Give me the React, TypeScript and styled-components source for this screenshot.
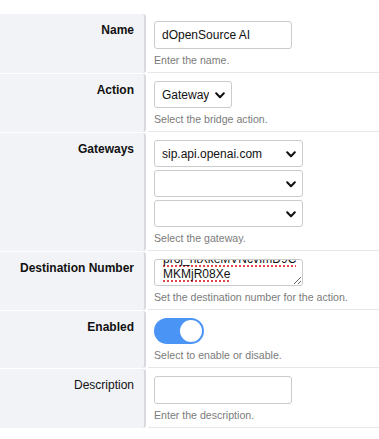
import React, { useEffect, useRef } from "react";
import styled, { createGlobalStyle } from "styled-components";

const GlobalStyle = createGlobalStyle`
  html, body {
    margin: 0;
    padding: 0;
    background: #ffffff;
  }
  body {
    font-family: "Liberation Sans", Arial, sans-serif;
    color: #000;
  }
`;

const FormTable = styled.div`
  display: grid;
  grid-template-columns: 146px 1fr;
  column-gap: 2px;
  row-gap: 1px;
  padding-top: 14px;
`;

const LabelCell = styled.div<{ $required?: boolean }>`
  background: #f2f3f7;
  border-right: 2px solid #d9dadf;
  border-top-right-radius: 3px;
  border-bottom-right-radius: 3px;
  padding: 9px 10px 0 0;
  text-align: right;
  font-size: 12px;
  line-height: 14px;
  font-weight: ${({ $required }) => ($required ? 700 : 400)};
  color: #111;
`;

const ValueCell = styled.div`
  border-bottom: 1px solid #e6e7eb;
  padding: 7px 0 5px 6px;
  display: flex;
  flex-direction: column;
  align-items: flex-start;
`;

const Help = styled.div`
  margin-top: 4px;
  font-size: 10.6px;
  line-height: 14px;
  color: #7b7b7b;
`;

const TextInput = styled.input`
  box-sizing: border-box;
  width: 138px;
  height: 28px;
  padding: 0 7px;
  border: 1px solid #cbcbcb;
  border-radius: 3px;
  font-family: inherit;
  font-size: 12px;
  color: #111;
  background: #fff;
  outline: none;
`;

const SelectStack = styled.div`
  display: flex;
  flex-direction: column;
  gap: 3px;
`;

const SelectWrap = styled.div`
  position: relative;
  display: inline-block;
`;

const Select = styled.select<{ $wide?: boolean }>`
  appearance: none;
  -webkit-appearance: none;
  box-sizing: border-box;
  width: ${({ $wide }) => ($wide ? "149px" : "78px")};
  height: 27px;
  padding: 0 22px 0 7px;
  border: 1px solid #cbcbcb;
  border-radius: 3px;
  background: #fff;
  font-family: inherit;
  font-size: 12px;
  color: #111;
  outline: none;
`;

const Chevron = styled.svg`
  position: absolute;
  right: 7px;
  top: 50%;
  margin-top: -3px;
  pointer-events: none;
`;

const TextArea = styled.textarea`
  box-sizing: border-box;
  width: 149px;
  height: 27px;
  padding: 2px 1px 3px 8px;
  border: 1px solid #cbcbcb;
  border-radius: 3px;
  font-family: inherit;
  font-size: 12px;
  line-height: 15px;
  color: #111;
  overflow: hidden;
  outline: none;
  display: block;
  text-decoration: underline dotted #e0454a;
  text-underline-offset: 2px;
  text-decoration-thickness: 1.5px;
`;

const Switch = styled.div<{ $on?: boolean }>`
  position: relative;
  width: 50px;
  height: 26px;
  border-radius: 13px;
  background: ${({ $on }) => ($on ? "#4a94f6" : "#cccccc")};
`;

const Knob = styled.span<{ $on?: boolean }>`
  position: absolute;
  top: 2px;
  left: ${({ $on }) => ($on ? "26px" : "2px")};
  width: 22px;
  height: 22px;
  border-radius: 50%;
  background: #fff;
`;

const Dropdown: React.FC<{ value?: string; wide?: boolean }> = ({ value, wide }) => (
  <SelectWrap>
    <Select $wide={wide} defaultValue={value ?? ""}>
      <option value={value ?? ""}>{value ?? ""}</option>
    </Select>
    <Chevron width="10" height="7" viewBox="0 0 10 7">
      <path d="M1.2 1.3 L5 5.2 L8.8 1.3" fill="none" stroke="#111" strokeWidth="2" strokeLinecap="round" strokeLinejoin="round" />
    </Chevron>
  </SelectWrap>
);

export default function App() {
  const destRef = useRef<HTMLTextAreaElement>(null);

  useEffect(() => {
    if (destRef.current) destRef.current.scrollTop = destRef.current.scrollHeight;
  }, []);

  return (
    <>
      <GlobalStyle />
      <FormTable>
        <LabelCell $required>Name</LabelCell>
        <ValueCell>
          <TextInput defaultValue="dOpenSource AI" />
          <Help>Enter the name.</Help>
        </ValueCell>

        <LabelCell $required>Action</LabelCell>
        <ValueCell>
          <Dropdown value="Gateway" />
          <Help>Select the bridge action.</Help>
        </ValueCell>

        <LabelCell $required>Gateways</LabelCell>
        <ValueCell>
          <SelectStack>
            <Dropdown value="sip.api.openai.com" wide />
            <Dropdown wide />
            <Dropdown wide />
          </SelectStack>
          <Help>Select the gateway.</Help>
        </ValueCell>

        <LabelCell $required>Destination Number</LabelCell>
        <ValueCell>
          <TextArea ref={destRef} spellCheck={false} defaultValue={"proj_ntXkeMVNcvImD9C\nMKMjR08Xe"} />
          <Help>Set the destination number for the action.</Help>
        </ValueCell>

        <LabelCell $required>Enabled</LabelCell>
        <ValueCell>
          <Switch $on>
            <Knob $on />
          </Switch>
          <Help>Select to enable or disable.</Help>
        </ValueCell>

        <LabelCell>Description</LabelCell>
        <ValueCell>
          <TextInput defaultValue="" />
          <Help>Enter the description.</Help>
        </ValueCell>
      </FormTable>
    </>
  );
}
